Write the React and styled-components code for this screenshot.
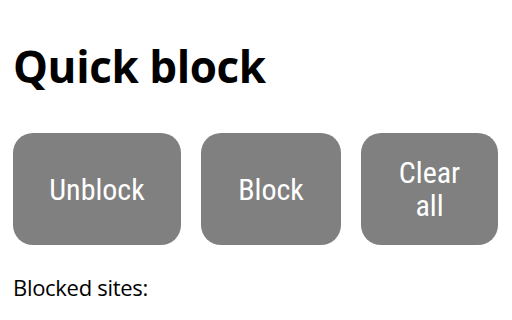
import React from "react"
import styled, { createGlobalStyle } from "styled-components"

const GlobalStyle = createGlobalStyle`
  html, body {
    margin: 0;
    padding: 0;
    background: #fff;
  }
`

const Page = styled.div`
  width: 512px;
  height: 320px;
  padding: 0 13px;
  box-sizing: border-box;
  font-family: "Open Sans", "Noto Sans", sans-serif;
  color: #000;
  overflow: hidden;
`

const Title = styled.h1`
  margin: 0;
  padding-top: 36px;
  font-size: 44px;
  font-weight: 700;
  line-height: 60px;
  letter-spacing: -0.4px;
`

const Buttons = styled.div`
  display: flex;
  gap: 20px;
  margin-top: 37px;
`

const Button = styled.button`
  width: ${(p) => p.$width}px;
  height: 112px;
  border: none;
  border-radius: 20px;
  background-color: #808080;
  color: #fff;
  font-family: "Liberation Sans Narrow", "Roboto Condensed", "Liberation Sans", sans-serif;
  font-size: 30px;
  line-height: 33px;
  padding: 0 26px;
  cursor: pointer;
`

const Label = styled.p`
  margin: 28px 0 0;
  font-size: 22px;
  line-height: 28px;
  letter-spacing: -0.3px;
`

const App = () => {
  return (
    <Page>
      <GlobalStyle />
      <Title>Quick block</Title>
      <Buttons>
        <Button $width={168}>Unblock</Button>
        <Button $width={140}>Block</Button>
        <Button $width={137}>Clear all</Button>
      </Buttons>
      <Label>Blocked sites:</Label>
    </Page>
  )
}

export default App
